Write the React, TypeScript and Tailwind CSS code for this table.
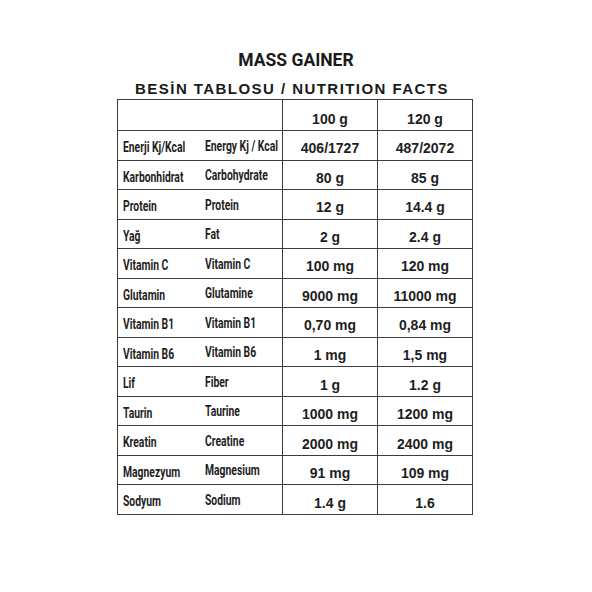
import React from "react";

const rows: [string, string, string, string][] = [
  ["Enerji Kj/Kcal", "Energy Kj / Kcal", "406/1727", "487/2072"],
  ["Karbonhidrat", "Carbohydrate", "80 g", "85 g"],
  ["Protein", "Protein", "12 g", "14.4 g"],
  ["Yağ", "Fat", "2 g", "2.4 g"],
  ["Vitamin C", "Vitamin C", "100 mg", "120 mg"],
  ["Glutamin", "Glutamine", "9000 mg", "11000 mg"],
  ["Vitamin B1", "Vitamin B1", "0,70 mg", "0,84 mg"],
  ["Vitamin B6", "Vitamin B6", "1 mg", "1,5 mg"],
  ["Lif", "Fiber", "1 g", "1.2 g"],
  ["Taurin", "Taurine", "1000 mg", "1200 mg"],
  ["Kreatin", "Creatine", "2000 mg", "2400 mg"],
  ["Magnezyum", "Magnesium", "91 mg", "109 mg"],
  ["Sodyum", "Sodium", "1.4 g", "1.6"],
];

const labelFont = { fontFamily: "Roboto, 'Liberation Sans', sans-serif" };
const numFont = { fontFamily: "'Liberation Sans', Arial, sans-serif" };

export default function App() {
  return (
    <div className="w-[592px] h-[592px] bg-white text-[#1e1e1e] overflow-hidden">
      <div
        className="pt-[52px] text-center text-[17.5px] leading-[17px] font-bold text-[#1a1a1a]"
        style={{ fontFamily: "Roboto, 'Liberation Sans', sans-serif" }}
      >
        MASS GAINER
      </div>
      <div
        className="mt-[12px] pr-[8px] text-center text-[15px] leading-[15px] font-bold tracking-[1.45px] text-[#1a1a1a]"
        style={numFont}
      >
        BESİN TABLOSU / NUTRITION FACTS
      </div>
      <div className="mt-[3px] ml-[117px] w-[356px] h-[416px] border border-[#3c3c3c] flex flex-col">
        <div className="flex-1 flex border-b border-[#3c3c3c]">
          <div className="w-[165px] border-r border-[#3c3c3c]" />
          <div
            className="w-[95px] border-r border-[#3c3c3c] flex items-center justify-center pt-[9px] text-[14px] font-bold"
            style={numFont}
          >
            100 g
          </div>
          <div
            className="flex-1 flex items-center justify-center pt-[9px] text-[14px] font-bold"
            style={numFont}
          >
            120 g
          </div>
        </div>
        {rows.map((r, i) => (
          <div
            key={i}
            className={
              "flex-1 flex" +
              (i < rows.length - 1 ? " border-b border-[#3c3c3c]" : "")
            }
          >
            <div className="w-[165px] border-r border-[#3c3c3c] flex text-[15px] font-bold" style={labelFont}>
              <div className="w-[87px] pl-[5px] flex items-center pt-[4px] whitespace-nowrap">
                <span className="inline-block origin-left scale-x-[0.69]">{r[0]}</span>
              </div>
              <div className="flex-1 flex items-center pt-[1px] whitespace-nowrap">
                <span className="inline-block origin-left scale-x-[0.69]">{r[1]}</span>
              </div>
            </div>
            <div
              className="w-[95px] border-r border-[#3c3c3c] flex items-center justify-center pt-[7px] text-[14px] font-bold whitespace-nowrap"
              style={numFont}
            >
              {r[2]}
            </div>
            <div
              className="flex-1 flex items-center justify-center pt-[7px] text-[14px] font-bold whitespace-nowrap"
              style={numFont}
            >
              {r[3]}
            </div>
          </div>
        ))}
      </div>
    </div>
  );
}
